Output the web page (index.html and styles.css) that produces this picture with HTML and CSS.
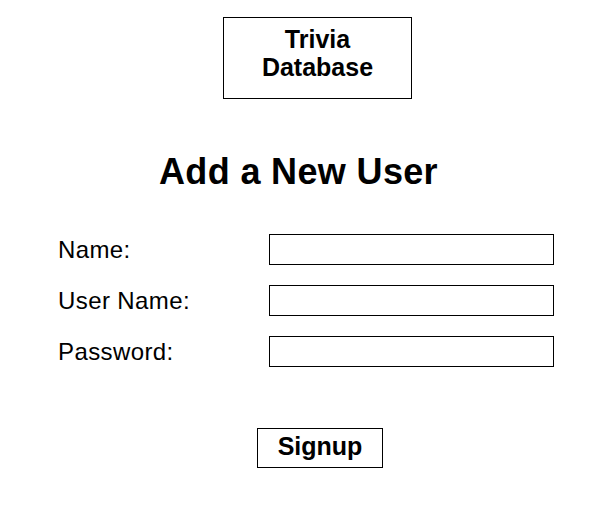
FILE: index.html
```html
<!DOCTYPE html>
<html lang="en">
<head>
<meta charset="utf-8">
<title>Add a New User</title>
<link rel="stylesheet" href="styles.css">
</head>
<body>
<div class="page">
  <div class="brand">Trivia<br>Database</div>
  <h1 class="title">Add a New User</h1>
  <form class="form">
    <label class="label" for="name">Name:</label>
    <input class="field" id="name" type="text">
    <label class="label" for="username">User Name:</label>
    <input class="field" id="username" type="text">
    <label class="label" for="password">Password:</label>
    <input class="field" id="password" type="password">
  </form>
  <button class="signup" type="button">Signup</button>
</div>
</body>
</html>
```

FILE: styles.css
```css
html, body {
  margin: 0;
  padding: 0;
  background: #fff;
  color: #000;
  font-family: "Liberation Sans", Arial, Helvetica, sans-serif;
}

.page {
  display: flex;
  flex-direction: column;
  align-items: flex-start;
  padding-top: 17px;
}

.brand {
  margin-left: 223px;
  width: 187px;
  height: 80px;
  box-sizing: content-box;
  border: 1px solid #000;
  padding: 0;
  text-align: center;
  font-weight: bold;
  font-size: 25px;
  line-height: 28px;
}

.brand::before {
  content: "";
  display: block;
  height: 7px;
}

.title {
  margin: 52px 0 0 159px;
  font-size: 36px;
  line-height: 41px;
  font-weight: bold;
  letter-spacing: 0.35px;
}

.form {
  margin: 42px 0 0 58px;
  display: grid;
  grid-template-columns: 211px 285px;
  row-gap: 20px;
  align-items: center;
}

.label {
  font-size: 24px;
  line-height: 28px;
  letter-spacing: 0.4px;
}

.field {
  box-sizing: border-box;
  width: 285px;
  height: 31px;
  margin: 0;
  padding: 0 4px;
  border: 1px solid #000;
  border-radius: 0;
  background: #fff;
  font: inherit;
  font-size: 16px;
  outline: none;
}

.signup {
  margin: 61px 0 0 257px;
  box-sizing: border-box;
  width: 126px;
  height: 40px;
  padding: 0 0 5px;
  border: 1px solid #000;
  border-radius: 0;
  background: #fff;
  color: #000;
  font-family: inherit;
  font-weight: bold;
  font-size: 25px;
  line-height: 28px;
}
```
